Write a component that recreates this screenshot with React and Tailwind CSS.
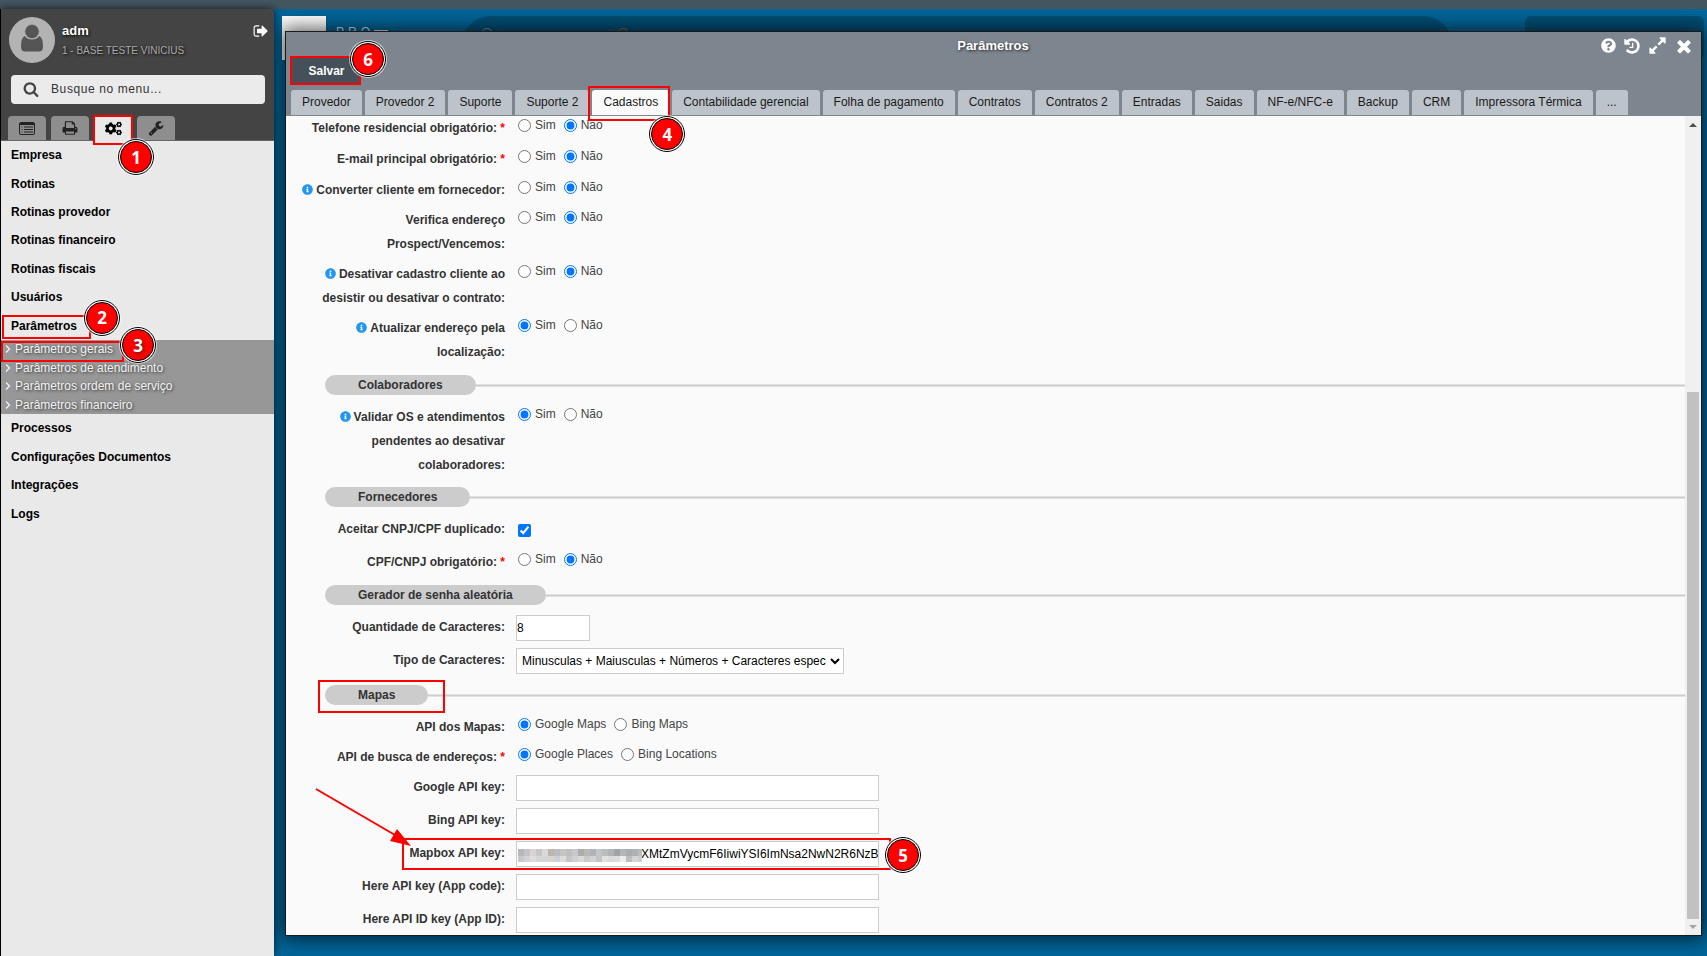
import React from 'react';
import { FaAngleRight, FaCogs, FaInfoCircle, FaQuestionCircle } from 'react-icons/fa';
import clsx from 'clsx';

const ICONS = {
  signOut:
    'M704 1440q0 4 1 20t.5 26.5-3 23.5-10 19.5-20.5 6.5h-320q-119 0-203.5-84.5t-84.5-203.5v-704q0-119 84.5-203.5t203.5-84.5h320q13 0 22.5 9.5t9.5 22.5q0 4 1 20t.5 26.5-3 23.5-10 19.5-20.5 6.5h-320q-66 0-113 47t-47 113v704q0 66 47 113t113 47h312l11.5 1 11.5 3 8 5.5 7 9 2 13.5zm928-544q0 26-19 45l-544 544q-19 19-45 19t-45-19-19-45v-288h-448q-26 0-45-19t-19-45v-384q0-26 19-45t45-19h448v-288q0-26 19-45t45-19 45 19l544 544q19 19 19 45z',
  search:
    'M1216 832q0-185-131.5-316.5t-316.5-131.5-316.5 131.5-131.5 316.5 131.5 316.5 316.5 131.5 316.5-131.5 131.5-316.5zm512 832q0 52-38 90t-90 38q-54 0-90-38l-343-342q-179 124-399 124-143 0-273.5-55.5t-225-150-150-225-55.5-273.5 55.5-273.5 150-225 225-150 273.5-55.5 273.5 55.5 225 150 150 225 55.5 273.5q0 220-124 399l343 343q37 37 37 90z',
  print:
    'M448 1536h896v-256h-896v256zm0-640h896v-384h-160q-40 0-68-28t-28-68v-160h-640v640zm1152 64q0-26-19-45t-45-19-45 19-19 45 19 45 45 19 45-19 19-45zm128 0v416q0 13-9.5 22.5t-22.5 9.5h-224v160q0 40-28 68t-68 28h-960q-40 0-68-28t-28-68v-160h-224q-13 0-22.5-9.5t-9.5-22.5v-416q0-79 56.5-135.5t135.5-56.5h64v-544q0-40 28-68t68-28h672q40 0 88 20t76 48l152 152q28 28 48 76t20 88v256h64q79 0 135.5 56.5t56.5 135.5z',
  wrench:
    'M448 1472q0-26-19-45t-45-19-45 19-19 45 19 45 45 19 45-19 19-45zm644-420l-682 682q-37 37-90 37-52 0-91-37l-106-108q-38-36-38-90 0-53 38-91l681-681q39 98 114.5 173.5t173.5 114.5zm634-435q0 39-23 106-47 134-164.5 217.5t-258.5 83.5q-185 0-316.5-131.5t-131.5-316.5 131.5-316.5 316.5-131.5q58 0 121.5 16.5t107.5 46.5q16 11 16 28t-16 28l-293 169v224l193 107q5-3 79-48.5t135.5-81 70.5-35.5q15 0 23.5 10t8.5 25z',
  history:
    'M1664 896q0 156-61 298t-164 245-245 164-298 61q-172 0-327-72.5t-264-204.5q-7-10-6.5-22.5t8.5-20.5l137-138q10-9 25-9 16 2 23 12 73 95 179 147t225 52q104 0 198.5-40.5t163.5-109.5 109.500-163.5 40.5-198.5-40.5-198.5-109.5-163.5-163.5-109.5-198.5-40.5q-98 0-188 35.5t-160 101.5l137 138q31 30 14 69-17 40-59 40h-448q-26 0-45-19t-19-45v-448q0-42 40-59 39-17 69 14l130 129q107-101 244.5-156.5t284.5-55.5q156 0 298 61t245 164 164 245 61 298zm-640-288v448q0 14-9 23t-23 9h-320q-14 0-23-9t-9-23v-64q0-14 9-23t23-9h224v-352q0-14 9-23t23-9h64q14 0 23 9t9 23z',
  expand:
    'M883 1056q0 13-10 23l-332 332 144 144q19 19 19 45t-19 45-45 19h-448q-26 0-45-19t-19-45v-448q0-26 19-45t45-19 45 19l144 144 332-332q10-10 23-10t23 10l114 114q10 10 10 23zm781-864v448q0 26-19 45t-45 19-45-19l-144-144-332 332q-10 10-23 10t-23-10l-114-114q-10-10-10-23t10-23l332-332-144-144q-19-19-19-45t19-45 45-19h448q26 0 45 19t19 45z',
  close:
    'M1490 1322q0 40-28 68l-136 136q-28 28-68 28t-68-28l-294-294-294 294q-28 28-68 28t-68-28l-136-136q-28-28-28-68t28-68l294-294-294-294q-28-28-28-68t28-68l136-136q28-28 68-28t68 28l294 294 294-294q28-28 68-28t68 28l136 136q28 28 28 68t-28 68l-294 294 294 294q28 28 28 68z',
};

const Icon = ({ name, className }) => (
  <svg viewBox="0 0 1792 1792" fill="currentColor" className={className} aria-hidden="true">
    <path d={ICONS[name]} />
  </svg>
);

const ListIcon = () => (
  <svg viewBox="0 0 16 13" className="h-[13px] w-4" aria-hidden="true">
    <rect x="0.5" y="0.5" width="15" height="12" rx="1.5" fill="none" stroke="#222" />
    <path d="M1 2h14" stroke="#222" strokeWidth="2" />
    <path d="M2.5 5h1M2.5 7.5h1M2.5 10h1M5 5h9M5 7.5h9M5 10h9" stroke="#222" strokeWidth="1.2" />
  </svg>
);

// Numbered step marker
const Badge = ({ n, className }) => (
  <span
    className={clsx(
      'pointer-events-none absolute z-20 size-9 rounded-full border border-black bg-white p-px shadow-[0_0_0_1px_rgba(255,255,255,0.6)]',
      className
    )}
  >
    <span className="flex size-full items-center justify-center rounded-full border border-black bg-[#fe0000] font-['Noto_Sans',sans-serif] text-[17px] font-bold leading-none text-white">
      {n}
    </span>
  </span>
);

const Outline = ({ className }) => (
  <span className={clsx('pointer-events-none absolute z-10 border-2 border-[#fe0000]', className)} />
);

const menuTop = ['Empresa', 'Rotinas', 'Rotinas provedor', 'Rotinas financeiro', 'Rotinas fiscais', 'Usuários', 'Parâmetros'];
const subMenu = ['Parâmetros gerais', 'Parâmetros de atendimento', 'Parâmetros ordem de serviço', 'Parâmetros financeiro'];
const menuBottom = ['Processos', 'Configurações Documentos', 'Integrações', 'Logs'];

const tabs = [
  'Provedor', 'Provedor 2', 'Suporte', 'Suporte 2', 'Cadastros', 'Contabilidade gerencial',
  'Folha de pagamento', 'Contratos', 'Contratos 2', 'Entradas', 'Saidas', 'NF-e/NFC-e',
  'Backup', 'CRM', 'Impressora Térmica', '...',
];

const Sidebar = () => (
  <aside className="relative z-10 flex w-[274px] shrink-0 flex-col border-l border-black bg-[#e9e9e9] shadow-[0_0_8px_rgba(0,0,0,0.7)]">
    <div className="border-b border-[#666] bg-[#444]">
      <div className="flex pl-2 pt-2">
        <svg viewBox="0 0 46 46" className="size-[46px]" aria-hidden="true">
          <circle cx="23" cy="23" r="23" fill="#b3b3b3" />
          <path d="M15.5 19q-3.5 2-3.500 11q0 4.500 4.500 4.500h13q4.500 0 4.500-4.500q0-9-3.500-11q-3 3.500-7.500 3.500t-7.500-3.500z" fill="#555" />
          <circle cx="23" cy="14.500" r="7.2" fill="#555" stroke="#b3b3b3" strokeWidth="0.8" />
        </svg>
        <div className="flex-1 pl-[7px] pt-1 [text-shadow:1px_1px_3px_#000]">
          <p className="text-[13px] font-bold leading-5 text-white">adm</p>
          <p className="text-[10px] leading-5 text-[#aaa]">1 - BASE TESTE VINICIUS</p>
        </div>
        <button aria-label="Sair" className="mr-[5px] mt-1.5 size-4 text-white">
          <Icon name="signOut" className="size-4" />
        </button>
      </div>
      <label className="ml-2.5 mr-[9px] mt-3 flex h-[29px] items-center rounded bg-[#ebebeb] pb-px pl-3">
        <Icon name="search" className="size-4 shrink-0 text-[#444]" />
        <input
          type="text"
          aria-label="Busque no menu"
          placeholder="Busque no menu..."
          className="ml-3 w-full bg-transparent text-[12px] tracking-wider outline-none placeholder:text-[#333]"
        />
      </label>
      <div className="mt-3 flex gap-[5px] pl-[7px]">
        <button aria-label="Cadastros" className="flex h-6 w-[38px] items-center justify-center rounded-t bg-[#8e8e8e]">
          <ListIcon />
        </button>
        <button aria-label="Relatórios" className="flex h-6 w-[38px] items-center justify-center rounded-t bg-[#8e8e8e]">
          <Icon name="print" className="size-4 text-[#222]" />
        </button>
        <button aria-label="Configurações" className="relative -mb-px flex h-[25px] w-[38px] items-center justify-center rounded-t bg-[#e9e9e9]">
          <FaCogs className="size-[17px] text-black" />
          <Outline className="-left-px -top-px h-[30px] w-10" />
          <Badge n={1} className="left-6 top-[23px]" />
        </button>
        <button aria-label="Ferramentas" className="flex h-6 w-[38px] items-center justify-center rounded-t bg-[#8e8e8e]">
          <Icon name="wrench" className="size-4 text-[#222]" />
        </button>
      </div>
    </div>

    <nav className="text-[12px] font-bold text-black">
      <ul className="grid h-[199px] grid-rows-7">
        {menuTop.map((item) => (
          <li key={item} className="relative flex items-center pl-2.5">
            <a href="#">{item}</a>
            {item === 'Parâmetros' && (
              <>
                <Outline className="left-px top-[3px] h-6 w-[89px]" />
                <Badge n={2} className="-top-3 left-[83px]" />
              </>
            )}
          </li>
        ))}
      </ul>
      <ul className="grid h-[74px] grid-rows-4 bg-[#979797] font-normal text-[#f2f2f2] [text-shadow:1px_1px_3px_#333]">
        {subMenu.map((item, i) => (
          <li key={item} className="relative flex items-center gap-1 pl-1">
            <svg viewBox="0 0 6 10" className="h-2.5 w-1.5" aria-hidden="true">
              <path d="M1 1.500l3.500 3.500L1 8.500" fill="none" stroke="#f2f2f2" strokeWidth="1.3" />
            </svg>
            <a href="#">{item}</a>
            {i === 0 && (
              <>
                <Outline className="left-0 top-px h-[21px] w-[123px]" />
                <Badge n={3} className="-top-[13px] left-[119px]" />
              </>
            )}
          </li>
        ))}
      </ul>
      <ul className="grid h-[114px] grid-rows-4">
        {menuBottom.map((item) => (
          <li key={item} className="flex items-center pl-2.5">
            <a href="#">{item}</a>
          </li>
        ))}
      </ul>
    </nav>
  </aside>
);

const rowSizes = {
  normal: 'min-h-[31px] pb-1.5',
  compact: 'min-h-[30px] pb-1.5',
  field: 'min-h-[33px]',
};

const Row = ({ label, info, required, htmlFor, size = 'normal', children }) => (
  <div className={clsx('relative flex items-start gap-[11px]', rowSizes[size])}>
    <div className="flex w-[219px] shrink-0 justify-end">
      <label htmlFor={htmlFor} className="w-[206px] text-right font-bold leading-6 text-[#333]">
        {info && <FaInfoCircle className="-mt-0.5 mr-[3px] inline size-[11px] text-[#2196f3]" />}
        {label}
        {required && <span className="text-[#fe0000]"> *</span>}
      </label>
    </div>
    {children}
  </div>
);

const Radios = ({ name, options = ['Sim', 'Não'], value }) => (
  <div className="flex h-[18px] items-center gap-2 pl-0.5 text-[#444]">
    {options.map((option) => (
      <label key={option} className="flex items-center gap-1">
        <input type="radio" name={name} defaultChecked={option === value} className="size-[13px]" />
        {option}
      </label>
    ))}
  </div>
);

const Section = ({ title, children }) => (
  <div className="relative flex items-center pb-2.5 pl-[39px] pt-1">
    <h2 className="h-5 rounded-full bg-[#ccc] px-[33px] font-bold leading-5 text-[#333]">{title}</h2>
    <div className="h-[3px] flex-1 border-y border-[#e2e2e2] bg-[#ccc]" />
    {children}
  </div>
);

const TextField = ({ id, className, ...props }) => (
  <input
    id={id}
    type="text"
    className={clsx('h-[26px] border border-[#ccc] bg-white text-black', className)}
    {...props}
  />
);

const mosaic = [
  ['#b5b7bd', '#c3c4c7', '#d9d4d2', '#c5c7cb', '#dcdad8', '#bfb5ad', '#b9bcc2', '#c8c4c2', '#bdbfc4', '#c9c9cb', '#adadad', '#bcb8b6', '#b0b3b9', '#c4c5c8', '#bbbcbf', '#b1b3b7', '#a2a3a9', '#b3b6b6', '#a9adad', '#b0b1b2', '#bdbdbd'],
  ['#c6c8cd', '#d5d3d5', '#dfddda', '#d4d6dc', '#d6d6d9', '#d9d4d2', '#cdd0d8', '#dcdcdc', '#c6c5c8', '#d3d1d0', '#d9d9d8', '#c8cacb', '#d2d2d1', '#c5c5c8', '#e1e1e1', '#dadada', '#dedddc', '#ececea', '#bcbdbd', '#d5d5d4', '#cfcfcf'],
];

const Mosaic = () => (
  <svg viewBox="0 0 124 18" className="absolute left-[232px] top-1 h-[18px] w-[124px]" aria-hidden="true">
    {mosaic.map((row, y) =>
      row.map((fill, x) => (
        <rect key={`${x}-${y}`} x={x * 6} y={4 + y * 7} width="6" height={y ? 6 : 7} fill={fill} />
      ))
    )}
  </svg>
);

const Form = () => (
  <form className="min-w-0 flex-1 overflow-hidden">
    <Row label="Telefone residencial obrigatório:" required>
      <Radios name="telefone" value="Não" />
    </Row>
    <Row label="E-mail principal obrigatório:" required>
      <Radios name="email" value="Não" />
    </Row>
    <Row label="Converter cliente em fornecedor:" info size="compact">
      <Radios name="converter" value="Não" />
    </Row>
    <Row label="Verifica endereço Prospect/Vencemos:">
      <Radios name="verifica" value="Não" />
    </Row>
    <Row label="Desativar cadastro cliente ao desistir ou desativar o contrato:" info>
      <Radios name="desativar" value="Não" />
    </Row>
    <Row label="Atualizar endereço pela localização:" info>
      <Radios name="atualizar" value="Sim" />
    </Row>

    <div className="pt-px">
      <Section title="Colaboradores" />
      <Row label="Validar OS e atendimentos pendentes ao desativar colaboradores:" info>
        <Radios name="validar" value="Sim" />
      </Row>
    </div>

    <Section title="Fornecedores" />
    <Row label="Aceitar CNPJ/CPF duplicado:" htmlFor="duplicado" size="field">
      <input id="duplicado" type="checkbox" defaultChecked className="ml-0.5 mt-[7px] size-[13px]" />
    </Row>
    <Row label="CPF/CNPJ obrigatório:" required>
      <Radios name="cpf" value="Não" />
    </Row>

    <Section title="Gerador de senha aleatória" />
    <Row label="Quantidade de Caracteres:" htmlFor="quantidade" size="field">
      <TextField id="quantidade" defaultValue="8" className="w-[74px]" />
    </Row>
    <Row label="Tipo de Caracteres:" htmlFor="tipo" size="field">
      <select id="tipo" className="h-[26px] w-[328px] border border-[#ccc] bg-white px-px text-black">
        <option>Minusculas + Maiusculas + Números + Caracteres especiais</option>
      </select>
    </Row>

    <Section title="Mapas">
      <Outline className="-top-px left-8 h-[33px] w-[127px]" />
    </Section>
    <Row label="API dos Mapas:" size="compact">
      <Radios name="mapas" options={['Google Maps', 'Bing Maps']} value="Google Maps" />
    </Row>
    <Row label="API de busca de endereços:" required size="compact">
      <Radios name="busca" options={['Google Places', 'Bing Locations']} value="Google Places" />
    </Row>
    <Row label="Google API key:" htmlFor="google" size="field">
      <TextField id="google" className="w-[363px]" />
    </Row>
    <Row label="Bing API key:" htmlFor="bing" size="field">
      <TextField id="bing" className="w-[363px]" />
    </Row>
    <Row label="Mapbox API key:" htmlFor="mapbox" size="field">
      <TextField
        id="mapbox"
        defaultValue="XMtZmVycmF6IiwiYSI6ImNsa2NwN2R6NzB"
        className="w-[363px] pl-[124px]"
      />
      <Mosaic />
      <Outline className="-top-[3px] left-[116px] h-8 w-[489px]" />
      <svg viewBox="0 0 96 60" className="absolute -top-[53px] left-[29px] z-10 h-[60px] w-24" aria-hidden="true">
        <path d="M1 1L80 47" stroke="#fe0000" strokeWidth="2" />
        <path d="M96 58L82 41L75 53z" fill="#fe0000" />
      </svg>
      <Badge n={5} className="-top-1 left-[599px]" />
    </Row>
    <Row label="Here API key (App code):" htmlFor="hereCode" size="field">
      <TextField id="hereCode" className="w-[363px]" />
    </Row>
    <Row label="Here API ID key (App ID):" htmlFor="hereId" size="field">
      <TextField id="hereId" className="w-[363px]" />
    </Row>
  </form>
);

const Scrollbar = () => (
  <div className="flex w-4 shrink-0 flex-col items-center bg-[#f0f0f0]">
    <div className="flex h-[17px] items-center">
      <div className="border-x-4 border-b-4 border-x-transparent border-b-[#505050]" />
    </div>
    <div className="flex w-3 flex-1 flex-col justify-end">
      <div className="h-[67%] bg-[#c1c1c1]" />
    </div>
    <div className="flex h-4 items-center">
      <div className="border-x-4 border-t-4 border-x-transparent border-t-[#a3a3a3]" />
    </div>
  </div>
);

const ParametersWindow = () => (
  <section className="absolute bottom-5 left-[11px] right-[5px] top-[22px] flex flex-col border border-[#1b1b1b] bg-[#7d868f] shadow-[0_0_18px_3px_rgba(0,0,0,0.65)]">
    <header className="grid h-[25px] grid-cols-[1fr_auto_1fr] items-center pl-1.5 pr-[7px] pt-0.5 text-white">
      <span />
      <h1 className="text-[13px] font-bold [text-shadow:1px_1px_3px_#222]">Parâmetros</h1>
      <div className="flex items-center justify-end gap-[7px]">
        <button aria-label="Ajuda"><FaQuestionCircle className="size-[15px]" /></button>
        <button aria-label="Histórico"><Icon name="history" className="size-[18px]" /></button>
        <button aria-label="Expandir"><Icon name="expand" className="size-[19px]" /></button>
        <button aria-label="Fechar"><Icon name="close" className="size-5" /></button>
      </div>
    </header>
    <div className="px-[5px]">
      <button className="relative block h-[27px] w-[69px] bg-[#46505a] pl-0.5 text-[12px] font-bold text-white">
        Salvar
        <Outline className="-left-px -top-px h-[29px] w-[71px]" />
        <Badge n={6} className="-top-4 left-[59px]" />
      </button>
    </div>
    <div className="flex gap-[3px] px-[5px] pb-px pt-1.5" role="tablist">
      {tabs.map((tab) => (
        <button
          key={tab}
          role="tab"
          aria-selected={tab === 'Cadastros'}
          className={clsx(
            'relative h-[25px] whitespace-nowrap rounded-t-[3px] px-[11px] pb-0.5 text-[12px] text-[#1a1a1a]',
            tab === 'Cadastros' ? 'bg-[#fafafa]' : 'bg-[#bdc3ca]'
          )}
        >
          {tab}
          {tab === 'Cadastros' && (
            <>
              <Outline className="-left-1 -top-1 h-[35px] w-[82px]" />
              <Badge n={4} className="left-[57px] top-[26px]" />
            </>
          )}
        </button>
      ))}
    </div>
    <div className="flex min-h-0 flex-1 bg-[#fafafa] text-[12px]">
      <Form />
      <Scrollbar />
    </div>
  </section>
);

const Desktop = () => (
  <main className="relative flex-1 overflow-hidden bg-[#00669a]">
    <div className="flex items-start pl-2 pr-[3px] pt-[7px]">
      <div className="size-11 bg-white" />
      <span className="ml-2.5 mt-2 text-[12px] leading-4 tracking-[4px] text-[#cfe0ea]">PRO</span>
      <span className="mt-3.5 h-0.5 w-3.5 bg-[#cfe0ea]" />
      <div className="ml-[73px] flex h-[60px] flex-1 items-start gap-3 rounded-full bg-[#004f77] pl-5 pt-3">
        <span className="size-3 rounded-full border border-[#7a98a8]" />
        <span className="ml-28 size-3 rounded-full border border-[#b0623c]" />
      </div>
      <div className="ml-[72px] h-11 w-[179px] rounded-md bg-[#004f77]" />
    </div>
    <ParametersWindow />
  </main>
);

const App = () => {
  return (
    <div className="flex h-screen flex-col overflow-hidden bg-[#00669a] font-['Liberation_Sans',Arial,sans-serif]">
      <div className="h-[9px] shrink-0 bg-[#43555f]" />
      <div className="flex min-h-0 flex-1">
        <Sidebar />
        <Desktop />
      </div>
    </div>
  );
};

export default App;
